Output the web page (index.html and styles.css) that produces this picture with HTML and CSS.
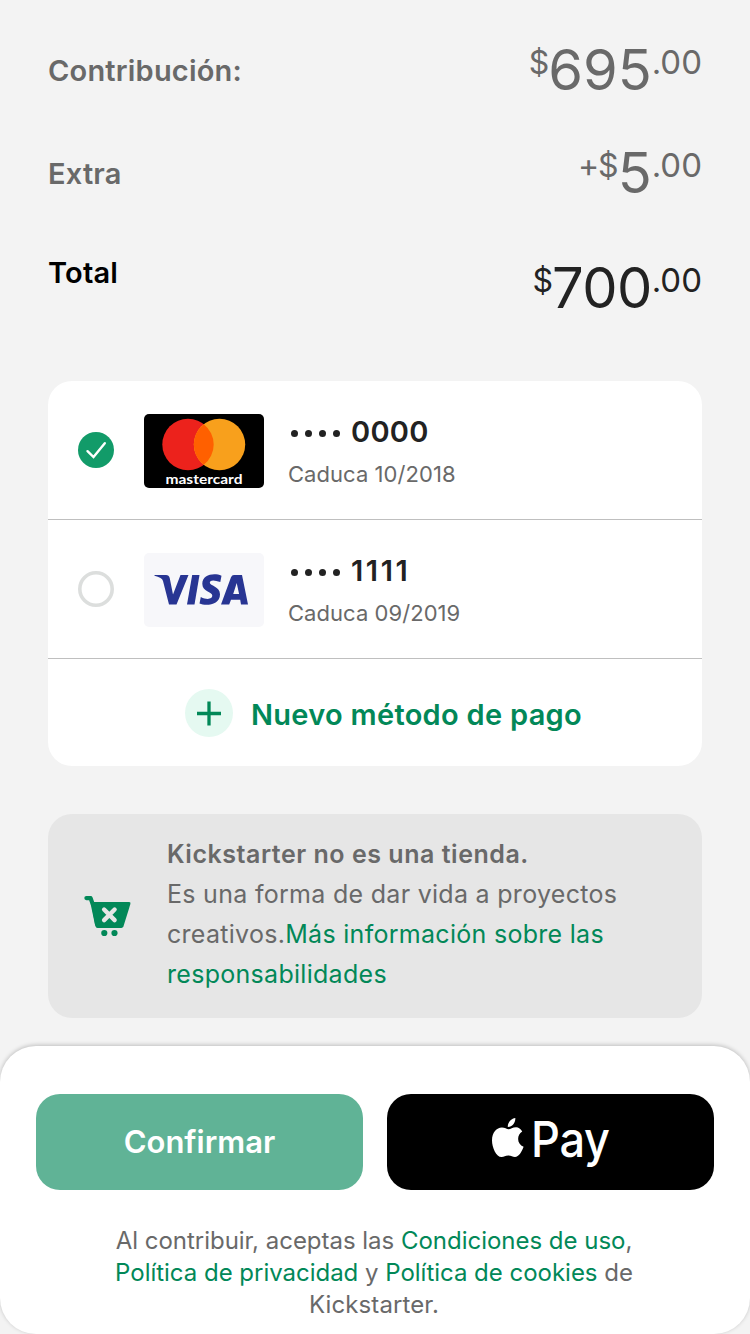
FILE: index.html
```html
<!DOCTYPE html>
<html lang="es">
<head>
<meta charset="utf-8">
<title>Contribución</title>
<link rel="stylesheet" href="styles.css">
</head>
<body>
<main class="screen">
  <section class="summary">
    <div class="line">
      <span class="label label-contribution">Contribución:</span>
      <span class="amount"><span class="small">$</span>695<span class="small cents">.00</span></span>
    </div>
    <div class="line">
      <span class="label label-extra">Extra</span>
      <span class="amount"><span class="small plus">+$</span>5<span class="small cents">.00</span></span>
    </div>
    <div class="line total">
      <span class="label label-total">Total</span>
      <span class="amount"><span class="small">$</span>700<span class="small cents">.00</span></span>
    </div>
  </section>

  <section class="methods">
    <div class="method">
      <svg class="radio" viewBox="0 0 36 36"><circle cx="18" cy="18" r="18" fill="#129b69"/><path d="M9.500 19.200 15.500 25 26.800 11.300" fill="none" stroke="#fff" stroke-width="2.400" stroke-linecap="round"/></svg>
      <svg class="brand" viewBox="0 0 120 74">
        <rect width="120" height="74" rx="5" fill="#000"/>
        <circle cx="44" cy="30.500" r="25.700" fill="#ec221c"/>
        <circle cx="75.500" cy="30.500" r="25.700" fill="#f8a01c"/>
        <path d="M59.750 10.200a25.700 25.700 0 0 1 0 40.600 25.700 25.700 0 0 1 0-40.600z" fill="#ff6000"/>
        <text class="mc-text" x="21.500" y="69.800" textLength="77" lengthAdjust="spacingAndGlyphs">mastercard</text>
      </svg>
      <div class="details">
        <div class="number"><span class="dots"><i></i><i></i><i></i><i></i></span><span>0000</span></div>
        <div class="expiry">Caduca 10/2018</div>
      </div>
    </div>
    <div class="method">
      <svg class="radio" viewBox="0 0 36 36"><circle cx="18" cy="18" r="16.200" fill="#fff" stroke="#dcdedd" stroke-width="3.600"/></svg>
      <svg class="brand" viewBox="0 0 120 74">
        <rect width="120" height="74" rx="5" fill="#f7f7fa"/>
        <g fill="#283593">
          <path d="M10.500 22H22q3 0 3.700 3L29 41.500 36.500 22H44.500L32.500 51.500H25L19 28q-.5-2-2.500-3-2.500-1.400-6-2.200z"/>
          <path d="M48.200 22H55.500L50.500 51.500H43z"/>
          <path d="M77.500 22.700 76.300 29q-10-3.600-10.500.8c0 3 10.200 3.600 10.200 11.400 0 10.800-14 12.300-20.500 9.300L56.800 44c7 3.600 11.500 1.500 11.500-1.200 0-4.200-10-3.800-10-12C58.300 21.500 70 19.700 77.500 22.700z"/>
          <path fill-rule="evenodd" d="M90 22H98L104 51.500H97L96.200 46.800H87L85.200 51.500H77L87 24.200Q87.900 22 90 22zM92.700 30 89.200 41H95.100z"/>
        </g>
      </svg>
      <div class="details">
        <div class="number"><span class="dots"><i></i><i></i><i></i><i></i></span><span class="ones">1111</span></div>
        <div class="expiry">Caduca 09/2019</div>
      </div>
    </div>
    <div class="add">
      <svg class="add-icon" viewBox="0 0 48 48"><circle cx="24" cy="24" r="24" fill="#e5f9f1"/><path d="M12 24.500H36M24 12.500V36.500" stroke="#028858" stroke-width="3.300"/></svg>
      <span class="add-text">Nuevo método de pago</span>
    </div>
  </section>

  <section class="notice">
    <svg class="cart" viewBox="0 0 48 42">
      <path d="M2.400 3.100H6.600L9 10 13 29" fill="none" stroke="#028858" stroke-width="4.200" stroke-linecap="round" stroke-linejoin="round"/>
      <path d="M7 7H45.200Q46.900 7 46.400 8.900L39.500 31.300Q38.900 33 37.300 33H13.600Q11.800 33 11.400 31z" fill="#028858"/>
      <path d="M20.100 14.500 30.600 25.100M30.600 14.500 20.100 25.100" stroke="#e6e6e6" stroke-width="4.400" stroke-linecap="round"/>
      <circle cx="20.300" cy="38" r="3.100" fill="#028858"/><circle cx="30.500" cy="38" r="3.100" fill="#028858"/>
    </svg>
    <div class="notice-text">
      <div class="n1">Kickstarter no es una tienda.</div>
      <div class="n2">Es una forma de dar vida a proyectos</div>
      <div class="n3">creativos.<a>Más información sobre las</a></div>
      <div class="n4"><a>responsabilidades</a></div>
    </div>
  </section>

  <footer class="sheet">
    <div class="buttons">
      <div class="button confirm">Confirmar</div>
      <div class="button apple">
        <svg class="apple-logo" viewBox="0 0 32 40">
          <path d="M23.300 0c.4 4.600-3.200 9.100-7.500 8.900C15.500 4.700 19 .6 23.300 0zM30.200 13.600c-6 4-5.200 12.400 1.400 15.200-1.600 4.600-4.900 10.300-8.600 10.300-2.600 0-3.500-1.600-6.700-1.600s-4.100 1.600-6.700 1.600C4.200 39.100 0 29.500 0 22.500 0 14.500 4.700 9.600 9.900 9.600c3 0 4.700 1.700 6.700 1.700 1.900 0 4-2 7.500-2 2.400 0 4.800 1.700 6.100 4.300z" fill="#fff"/>
        </svg>
        <span class="pay">Pay</span>
      </div>
    </div>
    <div class="legal">
      <div class="l1">Al contribuir, aceptas las <a>Condiciones de uso</a>,</div>
      <div class="l2"><a>Política de privacidad</a> y <a>Política de cookies</a> de</div>
      <div class="l3">Kickstarter.</div>
    </div>
  </footer>
</main>
</body>
</html>
```

FILE: styles.css
```css
* { box-sizing: border-box; }
body { margin: 0; background: #f3f3f3; font-family: Inter, "Liberation Sans", sans-serif; color: #696969; }
svg { display: block; flex: none; }
a { color: #028858; }
.screen { width: 750px; height: 1334px; overflow: hidden; display: flex; flex-direction: column; }

.summary { height: 381px; flex: none; padding: 40px 48px 0; }
.line { display: flex; justify-content: space-between; align-items: flex-start; height: 103px; white-space: nowrap; }
.label { font-size: 29px; font-weight: 600; line-height: 36px; margin-top: 13px; letter-spacing: .2px; }
.amount { font-size: 56px; line-height: 60px; }
.small { font-size: 32px; line-height: 32px; vertical-align: 16px; letter-spacing: -1px; }
.cents { font-size: 33px; letter-spacing: 0; }
.total { margin-top: 9px; color: #222; }
.total .label { margin-top: 0; color: #000; }
.total .amount { margin-top: 3px; letter-spacing: -.6px; }

.methods { flex: none; margin: 0 48px; background: #fff; border-radius: 24px; height: 385px; }
.method { height: 139px; border-bottom: 1px solid #bfbfbf; display: flex; align-items: center; padding: 0 30px; }
.radio { width: 36px; height: 36px; }
.brand { width: 120px; height: 74px; margin: 2px 0 0 30px; }
.mc-text { font: 700 14px Lato, sans-serif; fill: #fff; }
.details { margin-left: 24px; height: 78px; }
.number { display: flex; align-items: center; color: #222; font-size: 29px; font-weight: 600; line-height: 40px; padding-top: 1px; letter-spacing: .3px; }
.ones { letter-spacing: 2.6px; }
.dots { display: flex; gap: 7px; width: 63px; padding: 3px 0 0 3px; }
.dots i { width: 7px; height: 7px; border-radius: 50%; background: #222; }
.expiry { font-size: 22px; line-height: 30px; margin-top: 7px; letter-spacing: .05px; }
.add { height: 107px; display: flex; align-items: center; padding-left: 137px; }
.add-icon { width: 48px; height: 48px; }
.add-text { margin-left: 18px; color: #028858; font-size: 29px; font-weight: 600; line-height: 36px; padding-top: 4px; letter-spacing: .29px; white-space: nowrap; }

.notice { flex: none; margin: 48px 48px 0; height: 204px; background: #e6e6e6; border-radius: 24px; padding: 20px 0 0 36px; display: flex; font-size: 25px; line-height: 40px; letter-spacing: .29px; white-space: nowrap; }
.cart { width: 48px; height: 42px; margin-top: 61px; }
.notice-text { margin-left: 35px; }
.n1 { font-weight: 600; letter-spacing: .53px; }

.sheet { flex: none; margin-top: 28px; height: 288px; background: #fff; border-radius: 36px; box-shadow: 0 -1px 4px rgba(0, 0, 0, .22); padding: 48px 36px 0; }
.buttons { display: grid; grid-template-columns: 327px 327px; gap: 24px; }
.button { height: 96px; border-radius: 24px; display: flex; justify-content: center; color: #fff; }
.confirm { background: #60b396; font-size: 31px; font-weight: 600; line-height: 96px; }
.apple { background: #000; align-items: flex-start; justify-content: flex-start; padding-left: 105px; }
.apple-logo { width: 32px; height: 40px; margin-top: 24px; }
.pay { font-size: 49px; font-weight: 500; line-height: 60px; margin: 16px 0 0 7px; transform: scaleX(.92); transform-origin: left; letter-spacing: -.3px; }
.legal { margin: 35px 2px 0 0; text-align: center; font-size: 24px; line-height: 32px; letter-spacing: -.02px; white-space: nowrap; }
.l3 { letter-spacing: .1px; }
```
